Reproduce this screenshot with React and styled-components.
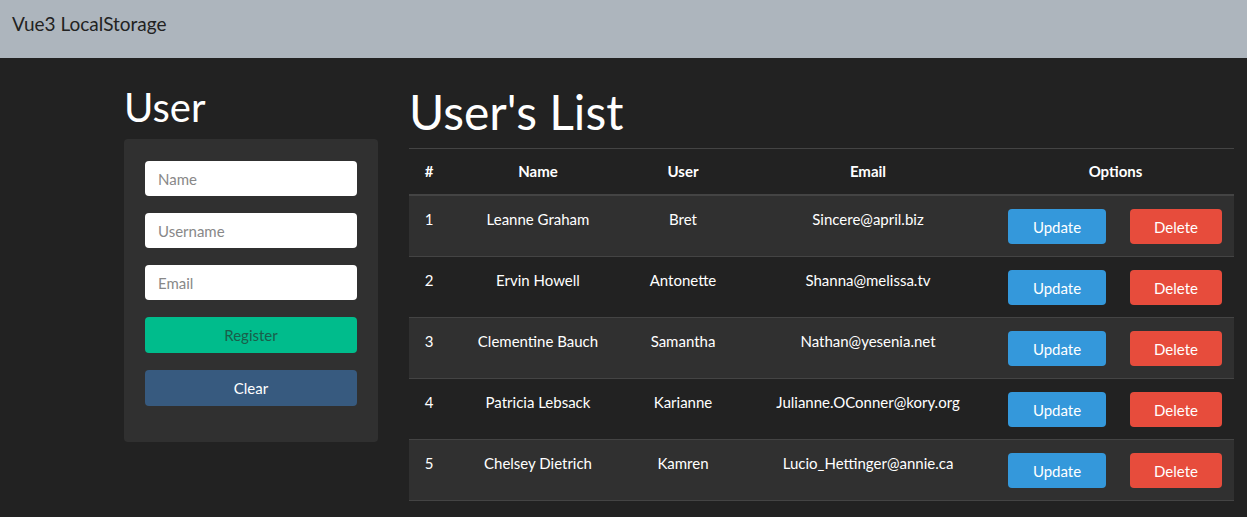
import React from "react";
import styled, { createGlobalStyle } from "styled-components";

const users = [
  { id: 1, name: "Leanne Graham", user: "Bret", email: "Sincere@april.biz" },
  { id: 2, name: "Ervin Howell", user: "Antonette", email: "Shanna@melissa.tv" },
  { id: 3, name: "Clementine Bauch", user: "Samantha", email: "Nathan@yesenia.net" },
  { id: 4, name: "Patricia Lebsack", user: "Karianne", email: "Julianne.OConner@kory.org" },
  { id: 5, name: "Chelsey Dietrich", user: "Kamren", email: "Lucio_Hettinger@annie.ca" },
];

const GlobalStyle = createGlobalStyle`
  * { box-sizing: border-box; }
  body {
    margin: 0;
    background: #222222;
    color: #ffffff;
    font-family: Lato, "Open Sans", sans-serif;
    font-size: 15px;
  }
`;

const Navbar = styled.nav`
  height: 58px;
  background: #adb5bd;
  display: flex;
  align-items: center;
  padding: 0 12px 11px;
  color: #222222;
  font-size: 19px;
`;

const Main = styled.main`
  display: flex;
  gap: 31px;
  padding-left: 124px;
  padding-top: 25px;
`;

const LeftCol = styled.section`
  width: 254px;
`;

const RightCol = styled.section`
  width: 825px;
`;

const Title = styled.h1`
  margin: 0;
  font-weight: 400;
  font-size: ${(p) => p.size}px;
  line-height: 1.2;
  margin-top: ${(p) => p.top}px;
  margin-bottom: ${(p) => p.bottom}px;
`;

const Card = styled.div`
  background: #303030;
  border-radius: 4px;
  padding: 22px 21px 36px;
  display: flex;
  flex-direction: column;
  gap: 17px;
`;

const Input = styled.input`
  height: 35px;
  width: 100%;
  border: none;
  border-radius: 4px;
  background: #ffffff;
  padding: 0 13px;
  font-family: Lato, sans-serif;
  font-size: 15px;
  color: #222;
  &::placeholder { color: #888; }
`;

const Button = styled.button`
  height: ${(p) => p.h || 35}px;
  width: ${(p) => (p.w ? `${p.w}px` : "100%")};
  border: none;
  border-radius: 4px;
  background: ${(p) => p.bg};
  color: ${(p) => p.fg || "#ffffff"};
  font-family: Lato, sans-serif;
  font-size: 15px;
  padding: 0;
  cursor: pointer;
`;

const Table = styled.table`
  width: 100%;
  border-collapse: collapse;
  table-layout: fixed;
  border-top: 1px solid #444;
`;

const Th = styled.th`
  font-weight: 700;
  text-align: center;
  padding: 12px 8px;
  height: 47px;
  border-bottom: 2px solid #444;
`;

const Row = styled.tr`
  background: ${(p) => (p.striped ? "#303030" : "#222222")};
  border-bottom: 1px solid #444;
`;

const Td = styled.td`
  text-align: center;
  vertical-align: top;
  padding: 12px 8px 12px;
  height: 60px;
  line-height: 22px;
`;

const Options = styled.div`
  display: flex;
  justify-content: space-between;
  padding: 1px 4px 0 3px;
`;

export default function App() {
  return (
    <>
      <GlobalStyle />
      <Navbar>Vue3 LocalStorage</Navbar>
      <Main>
        <LeftCol>
          <Title size={40} top={0} bottom={8}>User</Title>
          <Card>
            <Input placeholder="Name" />
            <Input placeholder="Username" />
            <Input placeholder="Email" />
            <Button h={36} bg="#00bc8c" fg="#1a5e4a">Register</Button>
            <Button h={36} bg="#375a7f">Clear</Button>
          </Card>
        </LeftCol>
        <RightCol>
          <Title size={48} top={0} bottom={7}>User's List</Title>
          <Table>
            <colgroup>
              <col style={{ width: 40 }} />
              <col style={{ width: 178 }} />
              <col style={{ width: 112 }} />
              <col style={{ width: 258 }} />
              <col style={{ width: 237 }} />
            </colgroup>
            <thead>
              <tr>
                <Th>#</Th>
                <Th>Name</Th>
                <Th>User</Th>
                <Th>Email</Th>
                <Th>Options</Th>
              </tr>
            </thead>
            <tbody>
              {users.map((u, i) => (
                <Row key={u.id} striped={i % 2 === 0}>
                  <Td>{u.id}</Td>
                  <Td>{u.name}</Td>
                  <Td>{u.user}</Td>
                  <Td>{u.email}</Td>
                  <Td>
                    <Options>
                      <Button w={98} bg="#3498db">Update</Button>
                      <Button w={92} bg="#e74c3c">Delete</Button>
                    </Options>
                  </Td>
                </Row>
              ))}
            </tbody>
          </Table>
        </RightCol>
      </Main>
    </>
  );
}
